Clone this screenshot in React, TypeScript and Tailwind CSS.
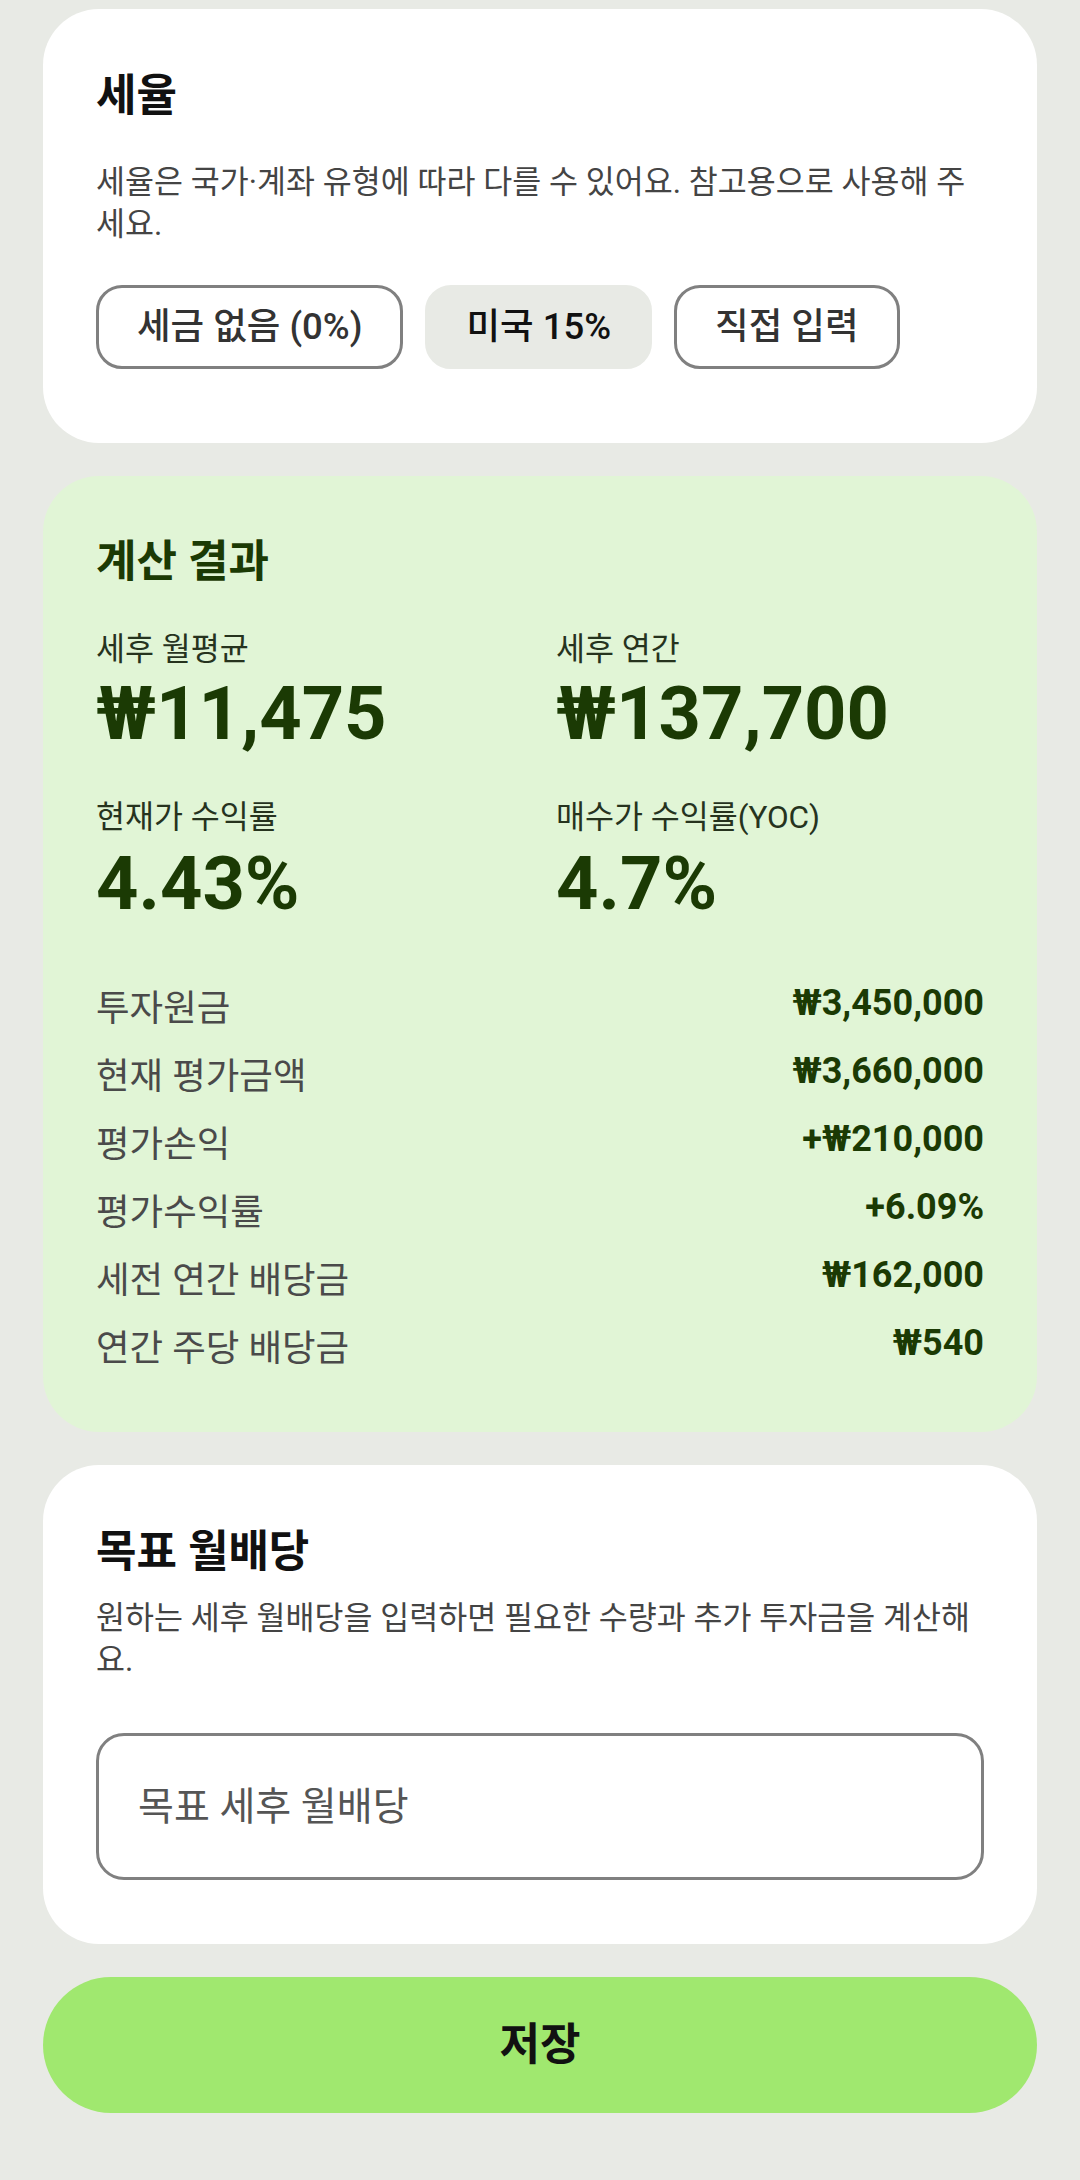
import React, { useState } from 'react';

const taxOptions = ['세금 없음 (0%)', '미국 15%', '직접 입력'];

const detailRows = [
  { label: '투자원금', value: '₩3,450,000' },
  { label: '현재 평가금액', value: '₩3,660,000' },
  { label: '평가손익', value: '+₩210,000' },
  { label: '평가수익률', value: '+6.09%' },
  { label: '세전 연간 배당금', value: '₩162,000' },
  { label: '연간 주당 배당금', value: '₩540' },
];

const App: React.FC = () => {
  const [selectedTax, setSelectedTax] = useState('미국 15%');
  const [target, setTarget] = useState('');

  return (
    <div className="min-h-screen bg-[#e8eae5] px-[43px] pt-[9px] pb-[69px] flex flex-col gap-[33px] font-['Roboto','Noto_Sans_CJK_KR',sans-serif]">
      {/* 세율 */}
      <section className="bg-white rounded-[56px] px-[53px] pt-[61px] pb-[74px]">
        <h2 className="text-[44px] leading-[52px] font-bold text-[#111]">세율</h2>
        <p className="mt-[40px] text-[31.5px] leading-[41.5px] text-[#444]">
          세율은 국가·계좌 유형에 따라 다를 수 있어요. 참고용으로 사용해 주세요.
        </p>
        <div className="mt-[40px] flex gap-[22px]">
          {taxOptions.map(opt => (
            <button
              key={opt}
              onClick={() => setSelectedTax(opt)}
              className={
                opt === selectedTax
                  ? 'h-[84px] px-[38px] rounded-[26px] bg-[#e8eae5] border-[3px] border-[#e8eae5] text-[36.5px] font-medium text-[#111]'
                  : 'h-[84px] px-[38px] rounded-[26px] bg-white border-[3px] border-[#808080] text-[36.5px] font-medium text-[#333]'
              }
            >
              {opt}
            </button>
          ))}
        </div>
      </section>

      {/* 계산 결과 */}
      <section className="bg-[#e1f5d6] rounded-[56px] px-[53px] pt-[60px] pb-[57px] text-[#1b3a04]">
        <h2 className="text-[44px] leading-[52px] font-bold">계산 결과</h2>
        <div className="mt-[44px] grid grid-cols-2 gap-x-[32px]">
          <div>
            <div className="text-[31.5px] leading-[36px] text-[#26331e]">세후 월평균</div>
            <div className="mt-[9px] text-[74px] leading-[74px] font-bold">₩11,475</div>
          </div>
          <div>
            <div className="text-[31.5px] leading-[36px] text-[#26331e]">세후 연간</div>
            <div className="mt-[9px] text-[74px] leading-[74px] font-bold">₩137,700</div>
          </div>
          <div className="mt-[49px]">
            <div className="text-[31.5px] leading-[36px] text-[#26331e]">현재가 수익률</div>
            <div className="mt-[11px] text-[74px] leading-[74px] font-bold">4.43%</div>
          </div>
          <div className="mt-[49px]">
            <div className="text-[31.5px] leading-[36px] text-[#26331e]">매수가 수익률(YOC)</div>
            <div className="mt-[11px] text-[74px] leading-[74px] font-bold">4.7%</div>
          </div>
        </div>
        <div className="mt-[62px] flex flex-col gap-[16px]">
          {detailRows.map(row => (
            <div key={row.label} className="flex justify-between items-start">
              <span className="text-[36.5px] leading-[52px] text-[#4a4a4a]">{row.label}</span>
              <span className="text-[36px] leading-[40px] font-bold">{row.value}</span>
            </div>
          ))}
        </div>
      </section>

      {/* 목표 월배당 */}
      <section className="bg-white rounded-[56px] px-[53px] pt-[61px] pb-[64px]">
        <h2 className="text-[44px] leading-[52px] font-bold text-[#111]">목표 월배당</h2>
        <p className="mt-[20px] text-[31.5px] leading-[41.5px] text-[#444]">
          원하는 세후 월배당을 입력하면 필요한 수량과 추가 투자금을 계산해요.
        </p>
        <input
          value={target}
          onChange={e => setTarget(e.target.value)}
          placeholder="목표 세후 월배당"
          className="mt-[52px] block w-full h-[147px] rounded-[28px] border-[3px] border-[#808080] px-[39px] text-[39px] text-[#222] placeholder:text-[#555] outline-none bg-white"
        />
      </section>

      <button className="h-[136px] rounded-full bg-[#a0e86f] text-[44px] font-bold text-[#111]">
        저장
      </button>
    </div>
  );
};

export default App;
